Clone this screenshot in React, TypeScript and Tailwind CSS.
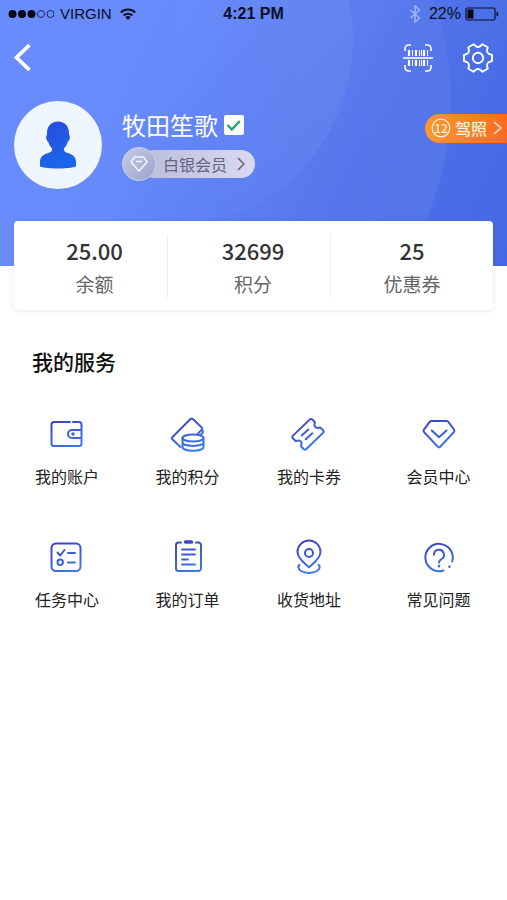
import type { ReactNode } from 'react';

interface Stat {
  value: string;
  label: string;
}

interface Service {
  label: string;
  icon: ReactNode;
}

const stats: Stat[] = [
  { value: '25.00', label: '余额' },
  { value: '32699', label: '积分' },
  { value: '25', label: '优惠券' },
];

const services: Service[] = [
  {
    label: '我的账户',
    icon: (
      <>
        <path d="M21 6H5a2.5 2.5 0 0 0-2.5 2.500v19A2.5 2.5 0 0 0 5 30h25a2.5 2.5 0 0 0 2.500-2.500v-19A2.5 2.5 0 0 0 30 6h-6" />
        <path d="M32 14h-9a4 4 0 0 0 0 8h9" />
        <circle cx="24" cy="18" r="0.8" />
      </>
    ),
  },
  {
    label: '我的积分',
    icon: (
      <>
        <path d="M10.5 31 2.3 23.2q-1-1 0-2L20.5 3q1.2-1 2.3 0l9 8.5q1 1 .2 2L27.5 18" />
        <path d="M32.5 14.5c1 1.5 0 3.500-2 4" />
        <ellipse cx="23" cy="22" rx="10.5" ry="3.5" />
        <path d="M12.5 22v9c0 5 21 5 21 0v-9M12.5 26.5c0 4.5 21 4.5 21 0" />
      </>
    ),
  },
  {
    label: '我的卡券',
    icon: (
      <>
        <path d="M18.6 3.6q1.400-1.300 2.800 0l2.200 2.200c1 1.200-.8 2.400.2 4.400 1.200 2 3.800 1.800 5.200 1.200l3 2.700q1.300 1.400 0 2.800L15.400 33q-1.400 1.300-2.800 0l-2.200-2.200c-1-1.200.8-2.800-.2-4.800-1.200-2-3.800-1.400-5.200-.8L2 22.400Q.7 21 2 19.600Z" />
        <path d="m10.7 19.5 6.600-6M14.7 23.3l6.600-6" />
      </>
    ),
  },
  {
    label: '会员中心',
    icon: (
      <>
        <path d="M10.3 5h15.400q.8 0 1.400.6l6 8q.9 1.300-.2 2.500L19.200 30.700q-1.200 1.100-2.400 0L3.1 16.100Q2 14.900 2.900 13.600l6-8q.6-.6 1.400-.6Z" />
        <path d="m10.8 14.500 7.200 6.700 7.500-6.700" />
      </>
    ),
  },
  {
    label: '任务中心',
    icon: (
      <>
        <rect x="2.5" y="4.5" width="29" height="27.5" rx="4.5" />
        <path d="m8.5 13.5 2.700 3 4.300-5.500M19 14h7M19 23.500h7" />
        <circle cx="11.2" cy="23.3" r="2.7" />
      </>
    ),
  },
  {
    label: '我的订单',
    icon: (
      <>
        <path d="M11 3.500H8.500A2.500 2.500 0 0 0 6 6v23.500A2.500 2.500 0 0 0 8.500 32h20a2.500 2.500 0 0 0 2.500-2.500V6a2.500 2.500 0 0 0-2.500-2.500H26" />
        <path d="M15.5 3h6" strokeWidth="3.5" />
        <path d="M12 10.500h13M12 15.500h13M12 20.500h6M12 25.500h13" strokeWidth="1.8" />
      </>
    ),
  },
  {
    label: '收货地址',
    icon: (
      <>
        <path d="M18 28.500c-1.500-2-11.500-8.500-11.500-15.500a11.500 11.500 0 0 1 23 0c0 7-10 13.500-11.500 15.500Z" />
        <circle cx="18" cy="14" r="4" />
        <path d="M8.500 26c-2 1-1.500 4 1.500 6 4.500 2.600 11.500 2.600 16 0 3-2 3.500-5 1.500-6" />
      </>
    ),
  },
  {
    label: '常见问题',
    icon: (
      <>
        <path d="M31.200 22.500A13.700 13.700 0 1 0 22.500 31.500" />
        <path d="M13 15.800a5 5 0 1 1 7.500 4.300q-2.500 1.300-2.500 3.600" />
        <path d="M18 27v.2M28.500 27.500v.2" strokeWidth="2.6" />
      </>
    ),
  },
];

function StatusBar() {
  return (
    <div className="grid h-7 grid-cols-3 items-center px-2 font-['Liberation_Sans',Arial,sans-serif] text-base text-[#0b1024]">
      <div className="flex items-center gap-1.5">
        <svg className="h-3 w-[46px]" viewBox="0 0 46 12">
          <g fill="#05070f">
            <circle cx="4.5" cy="6" r="4" />
            <circle cx="14" cy="6" r="4" />
            <circle cx="23.5" cy="6" r="4" />
          </g>
          <g fill="none" stroke="#1c2a5c" strokeWidth="1">
            <circle cx="33" cy="6" r="3.5" />
            <circle cx="42.5" cy="6" r="3.5" />
          </g>
        </svg>
        <span className="text-[15px]">VIRGIN</span>
        <svg className="ml-0.5 h-3 w-4" viewBox="0 0 16 12" fill="none" stroke="#0b1024" strokeWidth="2">
          <path d="M.8 4.600a10.200 10.200 0 0 1 14.400 0M3.600 7.500a6.200 6.200 0 0 1 8.800 0" />
          <path d="M8 12 5.200 9.300a4 4 0 0 1 5.600 0Z" fill="#0b1024" stroke="none" />
        </svg>
      </div>
      <span className="text-center font-bold">4:21 PM</span>
      <div className="flex items-center justify-end">
        <svg className="mr-2 h-[18px] w-3" viewBox="0 0 12 18" fill="none" stroke="#9db4fb" strokeWidth="1.5">
          <path d="m1.500 5 9 8L6 17V1l4.500 4-9 8" />
        </svg>
        <span>22%</span>
        <svg className="ml-1 h-[14px] w-[34px]" viewBox="0 0 34 14">
          <rect x="1" y="1" width="29" height="12" rx="1.5" fill="none" stroke="#0b1024" strokeWidth="1.2" />
          <rect x="2.5" y="2.5" width="6" height="9" fill="#05070f" />
          <path d="M31.500 4.500q2 .5 2 2.500t-2 2.500Z" fill="#0b1024" />
        </svg>
      </div>
    </div>
  );
}

function NavBar() {
  return (
    <div className="flex h-[60px] items-center px-[13px] text-white">
      <button aria-label="返回">
        <svg className="h-8 w-5" viewBox="0 0 20 32" fill="none" stroke="currentColor" strokeWidth="3.8">
          <path d="M16.500 3 3.500 15.500l13 12.500" />
        </svg>
      </button>
      <button aria-label="扫码" className="ml-auto">
        <svg className="h-8 w-8" viewBox="0 0 32 32" fill="none" stroke="currentColor" strokeWidth="1.6">
          <path d="M3 9V6.500A3.500 3.500 0 0 1 6.500 3H9M23 3h2.500A3.500 3.500 0 0 1 29 6.500V9M29 23v2.500a3.500 3.500 0 0 1-3.500 3.500H23M9 29H6.500A3.500 3.500 0 0 1 3 25.500V23" />
          <path d="M1 16h30" />
          <path d="M7 8v6M7 18v6M14 8v6M14 18v6M22 8v6M22 18v6" strokeWidth="2.2" />
          <path d="M10.500 8v6M10.500 18v6M17.500 8v6M17.500 18v6M19.500 8v6M19.500 18v6M25.500 8v6M25.500 18v6" strokeWidth="1" />
        </svg>
      </button>
      <button aria-label="设置" className="ml-7">
        <svg
          className="h-8 w-8"
          viewBox="0 0 32 32"
          fill="none"
          stroke="currentColor"
          strokeWidth="1.9"
          strokeLinejoin="round"
        >
          <path d="M30 12.800v6.400L27.100 20Q25 21 25 23.600l.7 3.100-5.300 3.100-2.400-2.200q-2-1.100-4 0l-2.400 2.200-5.300-3.100.7-3.100Q7 21 4.900 20L2 19.200v-6.400l2.900-.8Q7 11 7 8.400l-.7-3.100 5.300-3.100L14 4.400q2 1.100 4 0l2.400-2.200 5.300 3.100-.7 3.100Q25 11 27.100 12Z" />
          <circle cx="16" cy="16" r="5.2" />
        </svg>
      </button>
    </div>
  );
}

function Profile() {
  return (
    <div className="flex items-center pt-[13px] pb-[77px] pl-[14px]">
      <div className="flex h-[88px] w-[88px] shrink-0 items-center justify-center rounded-full bg-[#f0f6ff]">
        <svg className="h-12 w-9" viewBox="0 0 36 48">
          <defs>
            <linearGradient id="avatar" x1="0" y1="0" x2="0.3" y2="1">
              <stop offset="0" stopColor="#2b4bdc" />
              <stop offset="1" stopColor="#1a66ea" />
            </linearGradient>
          </defs>
          <path
            fill="url(#avatar)"
            d="M18 .5c7 0 11 5 11 11.500v2c1 .2 1 2.500.6 4-.4 1.500-1 2.500-1.800 2.800-.8 3-2.300 5.200-4 6.700 0 2.500 1.200 3.700 3.700 4.500 5 1.500 8.500 3.500 8.500 9V45c0 1.200-8 2.500-18 2.500S0 46.200 0 45v-4c0-5.500 3.500-7.500 8.500-9 2.500-.8 3.700-2 3.700-4.500-1.700-1.500-3.200-3.700-4-6.700-.8-.3-1.400-1.300-1.800-2.800-.4-1.500-.4-3.800.6-4v-2C7 5.500 11 .5 18 .5Z"
          />
        </svg>
      </div>
      <div className="ml-5">
        <div className="flex items-center gap-1.5">
          <h1 className="text-2xl leading-8 text-white">牧田笙歌</h1>
          <svg className="h-5 w-5" viewBox="0 0 20 20">
            <rect width="20" height="20" rx="2" fill="#fff" />
            <path d="m3.500 10 4.300 4.500 8-8.500" fill="none" stroke="#27a56b" strokeWidth="2.4" />
          </svg>
        </div>
        <button className="mt-1.5 flex items-center">
          <span className="relative flex h-[34px] w-[34px] items-center justify-center rounded-full border border-[#c9d0ec] bg-linear-to-br from-[#c8cbe4] to-[#9ba3cb]">
            <svg className="h-4 w-[18px]" viewBox="0 0 18 16" fill="none" stroke="#f2f4ff" strokeWidth="1.5" strokeLinejoin="round">
              <path d="M4.500 1h9L17 6l-8 9-8-9ZM6 5.500h6" />
            </svg>
          </span>
          <span className="-ml-4 flex h-7 items-center rounded-full bg-linear-to-r from-[#b9bddb] to-[#dbd9f0] pr-[10px] pl-[23px] text-base text-[#62657c]">
            白银会员
            <svg className="ml-[10px] h-3.5 w-2" viewBox="0 0 8 14" fill="none" stroke="currentColor" strokeWidth="1.5">
              <path d="m1 1 6 6-6 6" />
            </svg>
          </span>
        </button>
      </div>
      <button className="mb-[34px] ml-auto flex h-[29px] items-center rounded-l-full bg-linear-to-r from-[#fb9731] to-[#fd6a20] pr-[5px] pl-[6px] text-base font-medium text-[#fff0df]">
        <svg className="mr-1 h-5 w-5" viewBox="0 0 20 20">
          <circle cx="10" cy="10" r="8.8" fill="none" stroke="currentColor" strokeWidth="1.2" />
          <text x="10" y="14.5" textAnchor="middle" fontSize="12" fill="currentColor">
            12
          </text>
        </svg>
        驾照
        <svg className="ml-[6px] h-3.5 w-[9px]" viewBox="0 0 9 14" fill="none" stroke="currentColor" strokeWidth="1.4">
          <path d="m1 1 7 6-7 6" />
        </svg>
      </button>
    </div>
  );
}

export default function App() {
  return (
    <div className="min-h-screen bg-white font-['Noto_Sans_CJK_SC',sans-serif]">
      <header className="relative bg-[linear-gradient(115deg,#688cfe_0%,#688bfb_30%,#5073ea_68%,#4368e2_100%)]">
        {/* 背景圆弧 */}
        <svg
          className="absolute inset-0 h-full w-full"
          viewBox="0 0 507 266"
          preserveAspectRatio="xMinYMin slice"
          aria-hidden="true"
        >
          <defs>
            <linearGradient id="arc" x1="0" x2="1">
              <stop offset="0.5" stopColor="#fff" stopOpacity="0" />
              <stop offset="1" stopColor="#fff" stopOpacity="0.05" />
            </linearGradient>
            <linearGradient id="arc-large" x1="0.6" y1="0.5" x2="1" y2="0.6">
              <stop offset="0" stopColor="#fff" stopOpacity="0" />
              <stop offset="1" stopColor="#fff" stopOpacity="0.05" />
            </linearGradient>
          </defs>
          <circle cx="150" cy="100" r="301" fill="url(#arc-large)" />
          <circle cx="165" cy="40" r="188" fill="url(#arc)" />
        </svg>
        <div className="relative">
          <StatusBar />
          <NavBar />
          <Profile />
        </div>
      </header>

      <main>
        <section className="relative mx-[14px] -mt-[45px] grid grid-cols-[154fr_163fr_162fr] rounded bg-white pt-[14px] pb-3 text-center shadow-[0_1px_4px_rgba(0,0,0,0.1)]">
          {stats.map((stat) => (
            <div key={stat.label} className="border-r border-[#ededed] pl-2 last:border-r-0 last:pl-0">
              <p className="text-[22px] leading-[30px] font-medium text-[#333]">{stat.value}</p>
              <p className="mt-[5px] text-[19px] leading-7 text-[#666]">{stat.label}</p>
            </div>
          ))}
        </section>

        <section className="pt-9">
          <h2 className="px-8 text-[21px] leading-[30px] font-medium text-[#111]">我的服务</h2>
          <svg className="absolute h-0 w-0" aria-hidden="true">
            <defs>
              <linearGradient id="line" gradientUnits="userSpaceOnUse" x1="8" y1="2" x2="22" y2="34">
                <stop offset="0" stopColor="#3f3fc0" />
                <stop offset="1" stopColor="#3a7be6" />
              </linearGradient>
            </defs>
          </svg>
          <nav className="mt-10 grid grid-cols-[120fr_121fr_122fr_137fr] gap-y-[51px] pl-[7px]">
            {services.map((service) => (
              <a key={service.label} href="#" className="flex flex-col items-center">
                <svg
                  className="h-9 w-9"
                  viewBox="0 0 36 36"
                  fill="none"
                  stroke="url(#line)"
                  strokeWidth="2"
                  strokeLinecap="round"
                  strokeLinejoin="round"
                >
                  {service.icon}
                </svg>
                <span className="mt-3 text-base leading-6 text-[#222]">{service.label}</span>
              </a>
            ))}
          </nav>
        </section>
      </main>
    </div>
  );
}
